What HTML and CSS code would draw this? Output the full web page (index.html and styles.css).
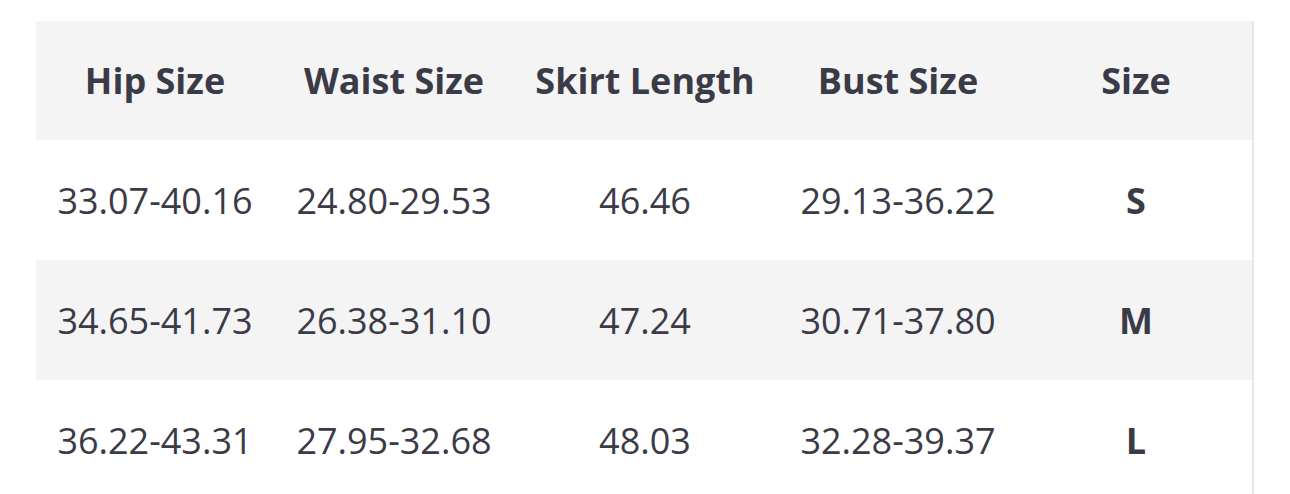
FILE: index.html
```html
<!DOCTYPE html>
<html>
<head>
<meta charset="utf-8">
<link rel="stylesheet" href="styles.css">
</head>
<body>
<div class="wrap">
  <table class="size-table">
    <colgroup>
      <col class="c1"><col class="c2"><col class="c3"><col class="c4"><col class="c5">
    </colgroup>
    <thead>
      <tr><th>Hip Size</th><th>Waist Size</th><th>Skirt Length</th><th>Bust Size</th><th>Size</th></tr>
    </thead>
    <tbody>
      <tr><td>33.07-40.16</td><td>24.80-29.53</td><td>46.46</td><td>29.13-36.22</td><td class="sz">S</td></tr>
      <tr class="alt"><td>34.65-41.73</td><td>26.38-31.10</td><td>47.24</td><td>30.71-37.80</td><td class="sz">M</td></tr>
      <tr><td>36.22-43.31</td><td>27.95-32.68</td><td>48.03</td><td>32.28-39.37</td><td class="sz">L</td></tr>
    </tbody>
  </table>
</div>
</body>
</html>
```
FILE: styles.css
```css
html, body {
  margin: 0;
  padding: 0;
  background: #ffffff;
  overflow: hidden;
}
.wrap {
  padding: 21px 0 0 36px;
  height: 473px;
}
.size-table {
  border-collapse: collapse;
  table-layout: fixed;
  width: 1217px;
  font-family: "Open Sans", "Liberation Sans", sans-serif;
  color: #3a3b47;
  border-right: 2px solid #e6e6e6;
}
.c1 { width: 238px; }
.c2 { width: 240px; }
.c3 { width: 262px; }
.c4 { width: 244px; }
.c5 { width: 233px; }
th, td {
  text-align: center;
  padding: 0;
  white-space: nowrap;
}
thead tr {
  background: #f4f4f5;
  height: 119px;
}
th {
  font-weight: 700;
  font-size: 36px;
}
tbody tr { height: 120px; }
tbody tr.alt { background: #f4f4f5; }
td {
  font-weight: 400;
  font-size: 36px;
}
td.sz { font-weight: 700; }
```
